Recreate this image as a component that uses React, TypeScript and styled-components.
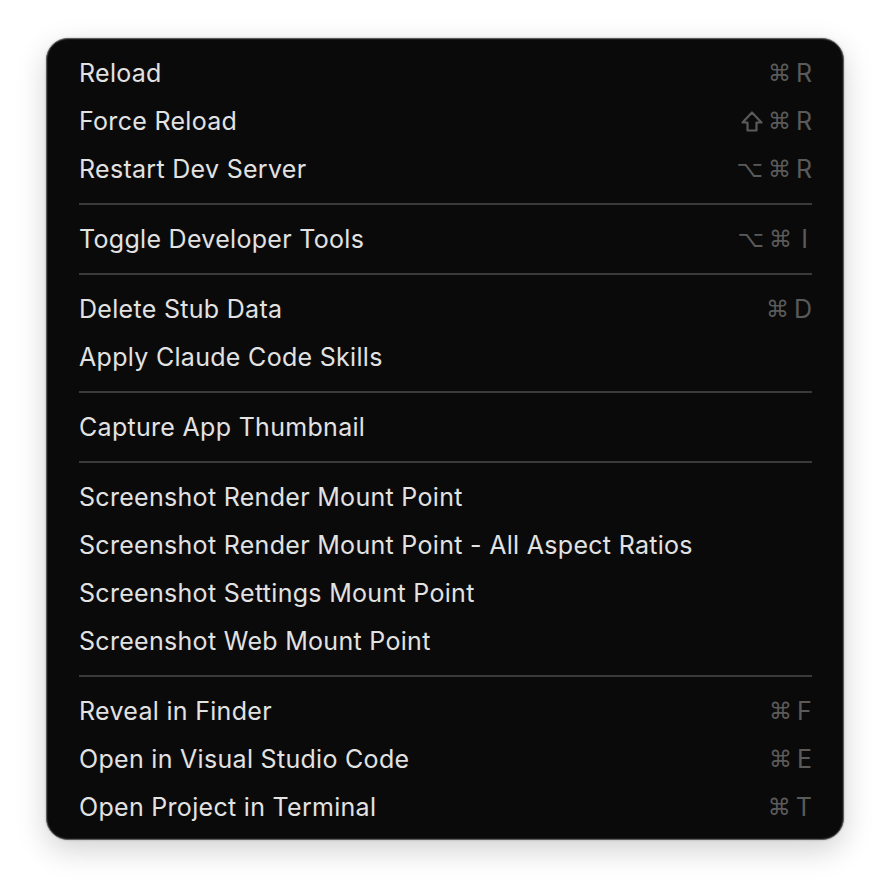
import React from 'react';
import styled, { createGlobalStyle } from 'styled-components';

const GlobalStyle = createGlobalStyle`
  html, body {
    margin: 0;
    padding: 0;
    background: #ffffff;
  }
  body {
    font-family: Inter, 'Noto Sans', sans-serif;
    -webkit-font-smoothing: antialiased;
  }
`;

type Item = { label: string; keys?: string[] };
type Group = Item[];

const groups: Group[] = [
  [
    { label: 'Reload', keys: ['⌘', 'R'] },
    { label: 'Force Reload', keys: ['⇧', '⌘', 'R'] },
    { label: 'Restart Dev Server', keys: ['⌥', '⌘', 'R'] },
  ],
  [{ label: 'Toggle Developer Tools', keys: ['⌥', '⌘', 'I'] }],
  [
    { label: 'Delete Stub Data', keys: ['⌘', 'D'] },
    { label: 'Apply Claude Code Skills' },
  ],
  [{ label: 'Capture App Thumbnail' }],
  [
    { label: 'Screenshot Render Mount Point' },
    { label: 'Screenshot Render Mount Point - All Aspect Ratios' },
    { label: 'Screenshot Settings Mount Point' },
    { label: 'Screenshot Web Mount Point' },
  ],
  [
    { label: 'Reveal in Finder', keys: ['⌘', 'F'] },
    { label: 'Open in Visual Studio Code', keys: ['⌘', 'E'] },
    { label: 'Open Project in Terminal', keys: ['⌘', 'T'] },
  ],
];

const ShiftIcon: React.FC = () => (
  <svg width="22" height="21" viewBox="0 0 22 21" fill="none">
    <path
      d="M11 1.5 L20.5 11.5 H15.5 V19.5 H6.5 V11.5 H1.5 Z"
      stroke="currentColor"
      strokeWidth="2.2"
      strokeLinejoin="round"
    />
  </svg>
);

const renderKey = (k: string) => {
  if (k === '⇧') return <ShiftIcon />;
  return k;
};

const App: React.FC = () => {
  return (
    <>
      <GlobalStyle />
      <Page>
        <Menu>
          {groups.map((group, gi) => (
            <React.Fragment key={gi}>
              {gi > 0 && <Separator />}
              {group.map((item) => (
                <Row key={item.label}>
                  <Label>{item.label}</Label>
                  {item.keys && (
                    <Shortcut>
                      {item.keys.map((k, ki) => (
                        <Key key={ki} $glyph={!/[A-Z]/.test(k)}>
                          {renderKey(k)}
                        </Key>
                      ))}
                    </Shortcut>
                  )}
                </Row>
              ))}
            </React.Fragment>
          ))}
        </Menu>
      </Page>
    </>
  );
};

const Page = styled.div`
  width: 890px;
  height: 894px;
  padding: 38px 0 0 46px;
  box-sizing: border-box;
`;

const Menu = styled.div`
  width: 798px;
  box-sizing: border-box;
  background: #0a0a0a;
  border: 1px solid #5c5c5c;
  border-radius: 22px;
  padding: 10px 31px 8px 32px;
  box-shadow: 0 10px 30px rgba(0, 0, 0, 0.18), 0 0 2px rgba(0, 0, 0, 0.3),
    inset 0 0 0 1px #1a1a1a;
  display: flex;
  flex-direction: column;
`;

const Row = styled.div`
  height: 48px;
  display: flex;
  align-items: center;
  justify-content: space-between;
`;

const Label = styled.span`
  font-size: 25px;
  color: #e2e2e2;
  letter-spacing: 0.3px;
`;

const Shortcut = styled.span`
  display: flex;
  align-items: center;
  gap: 5px;
  color: #5a5a5a;
  font-size: 25px;
`;

const Key = styled.span<{ $glyph: boolean }>`
  display: flex;
  align-items: center;
  justify-content: center;
  font-family: ${(p) => (p.$glyph ? "'DejaVu Sans', sans-serif" : "Inter, sans-serif")};
  font-size: ${(p) => (p.$glyph ? '23px' : '25px')};
  min-width: ${(p) => (p.$glyph ? '22px' : '15px')};
`;

const Separator = styled.div`
  height: 2px;
  margin: 10px 0;
  background: #3a3a3a;
`;

export default App;
